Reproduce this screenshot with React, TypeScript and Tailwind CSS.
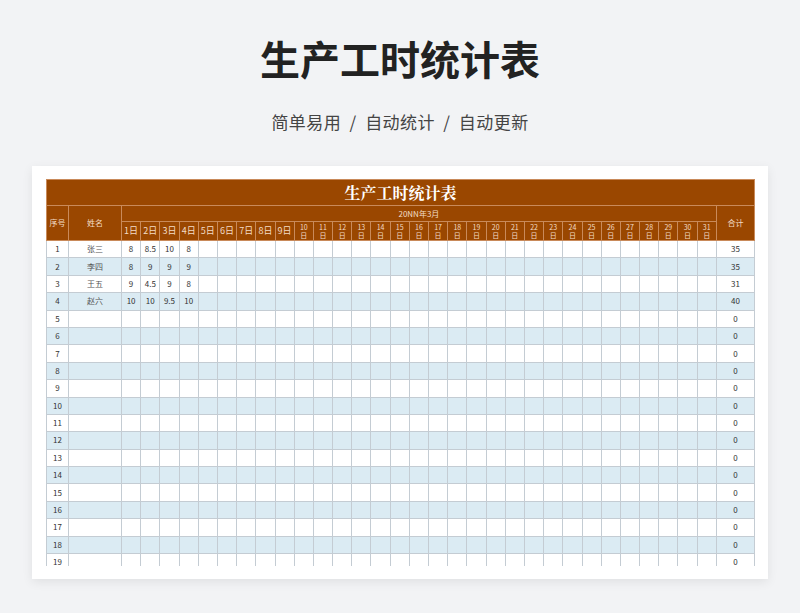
export default function App() {
  const data: Record<number, { name: string; v: string[]; t: string }> = {
    1: { name: "张三", v: ["8", "8.5", "10", "8"], t: "35" },
    2: { name: "李四", v: ["8", "9", "9", "9"], t: "35" },
    3: { name: "王五", v: ["9", "4.5", "9", "8"], t: "31" },
    4: { name: "赵六", v: ["10", "10", "9.5", "10"], t: "40" },
  };
  const days = Array.from({ length: 31 }, (_, i) => i + 1);
  const rows = Array.from({ length: 19 }, (_, i) => i + 1);
  const hb = "border border-[#c98a5a]";
  return (
    <div className="w-[800px] h-[613px] bg-[#f2f3f5] flex flex-col items-center overflow-hidden" style={{ fontFamily: '"Noto Sans CJK SC", "Noto Sans", sans-serif' }}>
      <div className="mt-[32px] text-[40px] leading-[52px] font-bold text-[#222]">生产工时统计表</div>
      <div className="mt-[26px] text-[17px] leading-[24px] text-[#444] tracking-wide">简单易用 &nbsp;/&nbsp; 自动统计 &nbsp;/&nbsp; 自动更新</div>
      <div className="mt-[32px] w-[736px] h-[413px] bg-white shadow-[0_3px_10px_rgba(0,0,0,0.08)] pt-[13px] pl-[14px] overflow-hidden">
        <div className="w-[709px] h-[387px] overflow-hidden">
          <table className="table-fixed border-collapse w-[709px] text-[8px] text-[#333]">
            <colgroup>
              <col className="w-[22px]" />
              <col className="w-[53px]" />
              {days.map((d) => <col key={d} className="w-[19.2px]" />)}
              <col className="w-[38px]" />
            </colgroup>
            <thead className="bg-[#9a4700] text-[#f3dcc6]">
              <tr>
                <th colSpan={34} className={`${hb} h-[26px] text-[16px] font-bold text-white`} style={{ fontFamily: '"Noto Serif CJK SC", "Noto Sans CJK SC", serif' }}>生产工时统计表</th>
              </tr>
              <tr>
                <th rowSpan={2} className={`${hb} font-normal`}>序号</th>
                <th rowSpan={2} className={`${hb} font-normal`}>姓名</th>
                <th colSpan={31} className={`${hb} h-[16px] font-normal`}>20NN年3月</th>
                <th rowSpan={2} className={`${hb} font-normal`}>合计</th>
              </tr>
              <tr>
                {days.map((d) => (
                  <th key={d} className={`${hb} h-[19px] p-0 font-normal overflow-hidden`}>
                    {d < 10 ? (
                      <div className="text-[9px] leading-[18px]">{d}日</div>
                    ) : (
                      <div className="h-[18px] overflow-hidden text-[7px] leading-[8.5px] pt-[0.5px]">{d}<br />日</div>
                    )}
                  </th>
                ))}
              </tr>
            </thead>
            <tbody>
              {rows.map((r) => {
                const d = data[r];
                const bg = r % 2 === 0 ? "bg-[#dbebf3]" : "bg-white";
                return (
                  <tr key={r} className={`${bg} h-[17.4px]`}>
                    <td className="border border-[#c4ccd3] text-center">{r}</td>
                    <td className="border border-[#c4ccd3] text-center text-[#555]">{d?.name ?? ""}</td>
                    {days.map((dd) => (
                      <td key={dd} className="border border-[#c4ccd3] text-center p-0">{d?.v[dd - 1] ?? ""}</td>
                    ))}
                    <td className="border border-[#c4ccd3] text-center">{d?.t ?? "0"}</td>
                  </tr>
                );
              })}
            </tbody>
          </table>
        </div>
      </div>
    </div>
  );
}
